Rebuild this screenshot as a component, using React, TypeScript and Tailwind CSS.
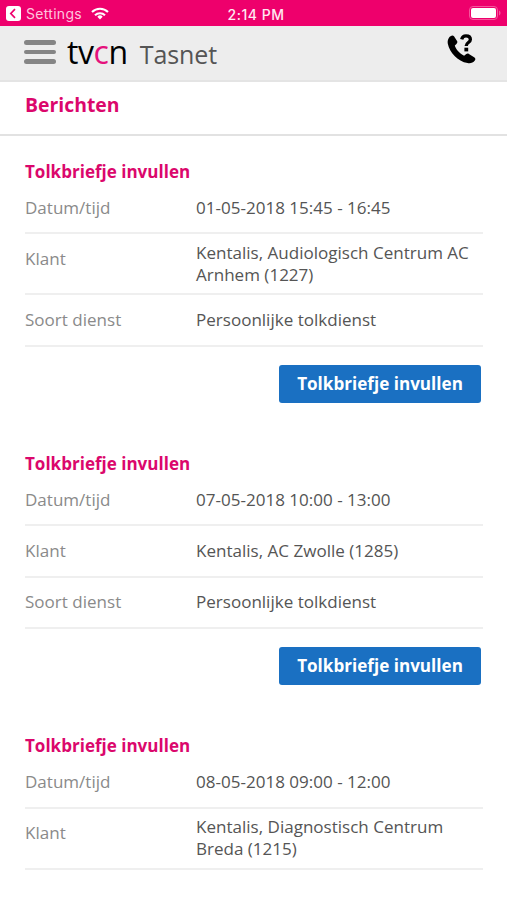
interface Field {
  label: string;
  value: string;
}

interface Message {
  id: number;
  fields: Field[];
  // The third message runs off the bottom of the screen, before its button
  cutOff?: boolean;
}

const MESSAGES: Message[] = [
  {
    id: 1,
    fields: [
      { label: 'Datum/tijd', value: '01-05-2018 15:45 - 16:45' },
      { label: 'Klant', value: 'Kentalis, Audiologisch Centrum AC Arnhem (1227)' },
      { label: 'Soort dienst', value: 'Persoonlijke tolkdienst' },
    ],
  },
  {
    id: 2,
    fields: [
      { label: 'Datum/tijd', value: '07-05-2018 10:00 - 13:00' },
      { label: 'Klant', value: 'Kentalis, AC Zwolle (1285)' },
      { label: 'Soort dienst', value: 'Persoonlijke tolkdienst' },
    ],
  },
  {
    id: 3,
    fields: [
      { label: 'Datum/tijd', value: '08-05-2018 09:00 - 12:00' },
      { label: 'Klant', value: 'Kentalis, Diagnostisch Centrum Breda (1215)' },
    ],
    cutOff: true,
  },
];

function StatusBar() {
  return (
    <div className="grid h-[26px] grid-cols-3 items-center bg-[#ee006c] pt-px pr-[7px] pl-1.5 font-['Inter',sans-serif] text-white">
      <div className="flex items-center">
        <svg className="h-[15px] w-[15px]" viewBox="0 0 15 15">
          <rect width="15" height="15" rx="3" fill="#fff" />
          <path d="M9 3.2 4.8 7.5 9 11.8" fill="none" stroke="#ee006c" strokeWidth="1.7" />
        </svg>
        <span className="ml-[5px] text-[14px] leading-none tracking-[0.3px] text-[#ffc4de]">Settings</span>
        <svg className="ml-[9px] h-[13px] w-[18px]" viewBox="0 0 18 13" fill="none" stroke="#fff" strokeWidth="2.1">
          <path d="M1 5.1a11.4 11.4 0 0 1 16 0" />
          <path d="M4 8.2a7.2 7.2 0 0 1 10 0" />
          <path d="M9 12.4 6.3 9.7a3.8 3.8 0 0 1 5.4 0z" fill="#fff" stroke="none" />
        </svg>
      </div>
      <span className="pt-0.5 pl-1.5 text-center text-[14px] leading-none font-medium tracking-[0.5px] whitespace-nowrap text-[#ffe8f2]">
        2:14 PM
      </span>
      <svg className="mr-[-1px] h-[15px] w-[32px] justify-self-end" viewBox="0 0 32 15">
        <rect x="0.5" y="0.5" width="28" height="13" rx="3.5" fill="none" stroke="#f5559c" />
        <rect x="2" y="2" width="25" height="10" rx="2" fill="#fff" />
        <path d="M30 4.5c2 .8 2 4.2 0 5z" fill="#f5559c" />
      </svg>
    </div>
  );
}

function Header() {
  return (
    <header className="flex h-14 items-start border-b-2 border-[#e4e4e4] bg-[#ededed] pr-[30px] pl-6">
      <button className="mt-[14px] flex w-8 flex-col gap-[5px]" aria-label="Menu">
        <span className="h-[4.7px] rounded-full bg-[#858585]" />
        <span className="h-[4.7px] rounded-full bg-[#858585]" />
        <span className="h-[4.7px] rounded-full bg-[#858585]" />
      </button>
      <div className="ml-[11px] flex items-baseline">
        <span className="text-[32px] leading-[52px] font-medium tracking-[-0.4px] text-black">
          tv<span className="text-[#e5127d]">c</span>n
        </span>
        <span className="ml-3 text-[25px] leading-none tracking-[-0.1px] text-[#555]">Tasnet</span>
      </div>
      <button className="mt-2 ml-auto" aria-label="Help">
        <svg className="h-[30px] w-[30px]" viewBox="0 0 30 30">
          <path
            d="M2 3.8C3.2 2 5.5.8 7 2.2l3.2 5.1c.5 1-.1 2.2-1 3L7.8 11.6c1.2 4 4.8 8 9.3 10.1l2.2-1.7c.8-.6 1.8-.7 2.6-.1l5.6 3.5c1.1.8 1.1 2 .3 3.1-1.6 2.3-4.3 3.2-7.2 2.6C10.6 27.2 2.6 18.6.8 9.7.4 7.4.9 5.3 2 3.8z"
            fill="#000"
          />
          <path
            d="M14.7 5.3c.5-2.3 2-3.4 4.3-3.4 2.600 0 4.400 1.300 4.400 3.600 0 3.200-4.200 2.800-4.200 6.400"
            fill="none"
            stroke="#000"
            strokeWidth="3.3"
          />
          <rect x="17.4" y="13.7" width="3.8" height="3.7" fill="#000" />
        </svg>
      </button>
    </header>
  );
}

function FieldRow({ label, value }: Field) {
  return (
    <div className="flex min-h-[51.3px] items-center border-b-2 border-[#efefef] text-[17.05px] leading-[22px]">
      <dt className="w-[171px] shrink-0 self-start pt-[13.6px] text-[#8a8a8a]">{label}</dt>
      <dd className="py-[7.5px] text-[#555]">{value}</dd>
    </div>
  );
}

function MessageItem({ message }: { message: Message }) {
  return (
    <article className="pb-[50.4px]">
      <h2 className="text-[17.05px] leading-[22px] font-bold text-[#db076c]">Tolkbriefje invullen</h2>
      <dl>
        {message.fields.map((field) => (
          <FieldRow key={field.label} {...field} />
        ))}
      </dl>
      {!message.cutOff && (
        <div className="flex justify-end pt-[18px] pr-0.5">
          <button className="h-[38px] w-[202px] rounded-[3px] bg-[#1a70c2] text-[17.1px] leading-[22px] font-bold text-white">
            Tolkbriefje invullen
          </button>
        </div>
      )}
    </article>
  );
}

export default function App() {
  return (
    <div className="h-[900px] w-[507px] overflow-hidden bg-white font-['Open_Sans',sans-serif]">
      <StatusBar />
      <Header />
      <div className="h-[54px] border-b-2 border-[#e2e2e2] px-[25px]">
        <h1 className="text-[19.4px] leading-[46px] font-bold text-[#db076c]">Berichten</h1>
      </div>
      <main className="pt-[25px] pr-6 pl-[25px]">
        {MESSAGES.map((message) => (
          <MessageItem key={message.id} message={message} />
        ))}
      </main>
    </div>
  );
}
